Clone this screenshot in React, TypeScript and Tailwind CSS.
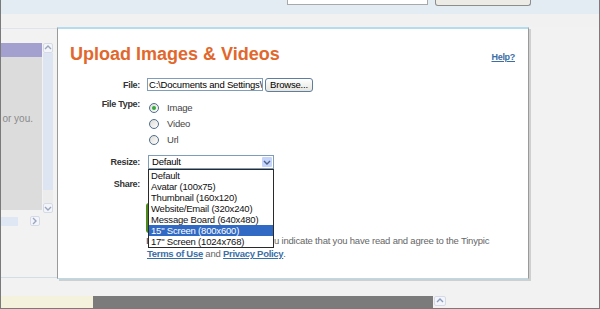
import React from 'react'

const sizes = [
  'Default',
  'Avatar (100x75)',
  'Thumbnail (160x120)',
  'Website/Email (320x240)',
  'Message Board (640x480)',
  '15" Screen (800x600)',
  '17" Screen (1024x768)',
]

function Chevron({ dir = 'down', className = '' }: { dir?: 'up' | 'down' | 'right'; className?: string }) {
  const d = dir === 'up' ? 'M1 5 L4 2 L7 5' : dir === 'right' ? 'M2 1 L5 4 L2 7' : 'M1 3 L4 6 L7 3'
  return (
    <svg width="8" height="8" viewBox="0 0 8 8" className={className}>
      <path d={d} fill="none" stroke="currentColor" strokeWidth="1.4" />
    </svg>
  )
}

function Radio({ label, checked }: { label: string; checked?: boolean }) {
  return (
    <div className="flex h-[16px] items-center">
      <span className="ml-[2px] flex h-[10px] w-[10px] items-center justify-center rounded-full border border-[#4d6e8e] bg-gradient-to-br from-[#dddcd5] to-white">
        {checked && <span className="h-[4px] w-[4px] rounded-full bg-[#33a83b]" />}
      </span>
      <span className="ml-[8px] text-[9.5px] leading-none tracking-[-0.2px] text-[#444]">{label}</span>
    </div>
  )
}

function Label({ children, className = '' }: { children: React.ReactNode; className?: string }) {
  return (
    <div className={`w-[82px] shrink-0 text-right text-[9px] font-bold leading-[10px] tracking-[-0.3px] text-[#333] ${className}`}>
      {children}
    </div>
  )
}

export default function App() {
  return (
    <div className="flex h-[309px] w-[600px] flex-col overflow-hidden border-x border-b border-[#7a7a7a] bg-[#f2f2f2] font-['Liberation_Sans',Arial,sans-serif]">
      {/* top browser strip */}
      <div className="h-[14px] bg-[#e3ecf3]">
        <div className="flex">
          <div className="ml-[286px] h-[5px] w-[141px] border-x border-b border-[#a9a9a9] bg-white" />
          <div className="ml-[7px] h-[6px] w-[96px] rounded-b-[3px] border-x border-b border-[#8d8d8d] bg-[#ecebe6]" />
        </div>
      </div>
      <div className="h-[13px] bg-[#f1f1f1]" />

      {/* middle */}
      <div className="flex h-[269px]">
        {/* left panel */}
        <div className="flex w-[56px] flex-col">
          <div className="mt-[1px] h-px bg-[#dfe4ea]" />
          <div className="mt-[14px] flex gap-[1px]">
            <div className="flex w-[41px] flex-col">
              <div className="h-[14px] bg-[#a3a0cf]" />
              <div className="h-[153px] overflow-hidden bg-[#dcdcdc] pt-[56px] pr-[9px] text-right text-[10px] leading-[12px] whitespace-nowrap text-[#8a8a8a]">
                or you.
              </div>
            </div>
            <div className="flex h-[170px] w-[10px] flex-col">
              <div className="flex h-[10px] items-center justify-center rounded-[2px] border border-[#d5dbe6] bg-[#f3f5fa] text-[#9aa6bd]">
                <Chevron dir="up" />
              </div>
              <div className="flex-1 bg-[#dde5f3]" />
              <div className="h-[13px] bg-[#ececec]" />
              <div className="flex h-[10px] items-center justify-center rounded-[2px] border border-[#d5dbe6] bg-[#f3f5fa] text-[#9aa6bd]">
                <Chevron dir="down" />
              </div>
            </div>
          </div>
          <div className="mt-[3px] flex h-[10px] items-center">
            <div className="h-[9px] w-[17px] bg-[#dfe7f4]" />
            <div className="ml-[12px] flex h-[10px] w-[10px] items-center justify-center rounded-[2px] border border-[#d5dbe6] bg-[#f3f5fa] text-[#9aa6bd]">
              <Chevron dir="right" />
            </div>
          </div>
          <div className="mt-[51px] h-px bg-[#d3dde6]" />
        </div>

        {/* dialog */}
        <div className="flex h-[252px] w-[472px] flex-col border-x border-t-2 border-b border-x-[#9a9a9a] border-t-[#b5dcee] border-b-[#b7dbe9] bg-white shadow-[2px_2px_0_0_#cfcfcf]">
          <div className="flex items-baseline justify-between pt-[15px] pr-[13px] pl-[12px]">
            <h1 className="text-[18px] leading-[21px] font-bold text-[#e2672c]">Upload Images &amp; Videos</h1>
            <a className="text-[9px] font-bold tracking-[-0.3px] text-[#3b6ea5] underline">Help?</a>
          </div>

          <div className="mt-[13px] flex h-[13px] items-center gap-[7px]">
            <Label>File:</Label>
            <div className="flex items-center">
              <div className="flex h-[13px] w-[116px] items-center overflow-hidden border border-[#7f9db9] bg-white pl-[1px] text-[9.5px] leading-none tracking-[-0.2px] whitespace-nowrap text-black">
                C:\Documents and Settings\
              </div>
              <button className="ml-[2px] flex h-[14px] w-[48px] items-center justify-center rounded-[3px] border border-[#5f7d9c] bg-gradient-to-b from-white to-[#e6e5de] text-[9.5px] leading-none tracking-[-0.2px] text-black">
                Browse...
              </button>
            </div>
          </div>

          <div className="mt-[9px] flex gap-[7px]">
            <Label className="-mt-[1px]">File Type:</Label>
            <div className="flex flex-col">
              <Radio label="Image" checked />
              <Radio label="Video" />
              <Radio label="Url" />
            </div>
          </div>

          <div className="mt-[7px] flex h-[14px] items-center gap-[7px]">
            <Label>Resize:</Label>
            <div className="relative ml-[1px] w-[126px]">
              <div className="flex h-[14px] items-center border border-[#7f9db9] bg-white">
                <span className="flex-1 pl-[3px] text-[9.5px] leading-none tracking-[-0.2px] text-black">Default</span>
                <span className="mr-[1px] flex h-[10px] w-[10px] items-center justify-center rounded-[1px] bg-[#c4d4fb] text-[#4d6185]">
                  <Chevron dir="down" />
                </span>
              </div>
              <ul className="absolute top-full left-0 z-10 w-full border border-[#2a2a2a] bg-white">
                {sizes.map((s, i) => (
                  <li
                    key={s}
                    className={`h-[11px] pl-[2px] text-[9.5px] leading-[11px] tracking-[-0.2px] whitespace-nowrap ${
                      i === 5 ? 'bg-[#316ac5] text-white' : 'text-[#111]'
                    }`}
                  >
                    {s}
                  </li>
                ))}
              </ul>
            </div>
          </div>

          <div className="mt-[10px] flex gap-[7px]">
            <Label>Share:</Label>
          </div>

          <div className="mt-[14px] pl-[88px]">
            <div className="h-[30px] w-[110px] rounded-[3px] bg-[#4f8a1c]" />
          </div>

          <div className="mt-[2px] flex pl-[88px] text-[9.5px] leading-[11px] tracking-[-0.2px] whitespace-nowrap text-[#666]">
            <span className="w-[2px] overflow-hidden text-[#333]">I</span>
            <span className="w-[126px] shrink-0" />
            <span>u indicate that you have read and agree to the Tinypic</span>
          </div>
          <div className="mt-[2px] pl-[89px] text-[9.5px] leading-[11px] tracking-[-0.2px] whitespace-nowrap text-[#666]">
            <a className="font-bold tracking-[-0.3px] text-[#3b6ea5] underline">Terms of Use</a> and{' '}
            <a className="font-bold tracking-[-0.3px] text-[#3b6ea5] underline">Privacy Policy</a>.
          </div>
        </div>

        <div className="flex-1" />
      </div>

      {/* bottom taskbar */}
      <div className="flex h-[12px]">
        <div className="w-[92px] bg-[#f4f2dc]" />
        <div className="w-[340px] bg-[#7b7b7b]" />
        <div className="ml-[1px] flex h-[10px] w-[12px] items-center justify-center rounded-[2px] border border-[#d5dbe6] bg-[#f3f5fa] text-[#8a9cc0]">
          <Chevron dir="up" />
        </div>
      </div>
    </div>
  )
}
